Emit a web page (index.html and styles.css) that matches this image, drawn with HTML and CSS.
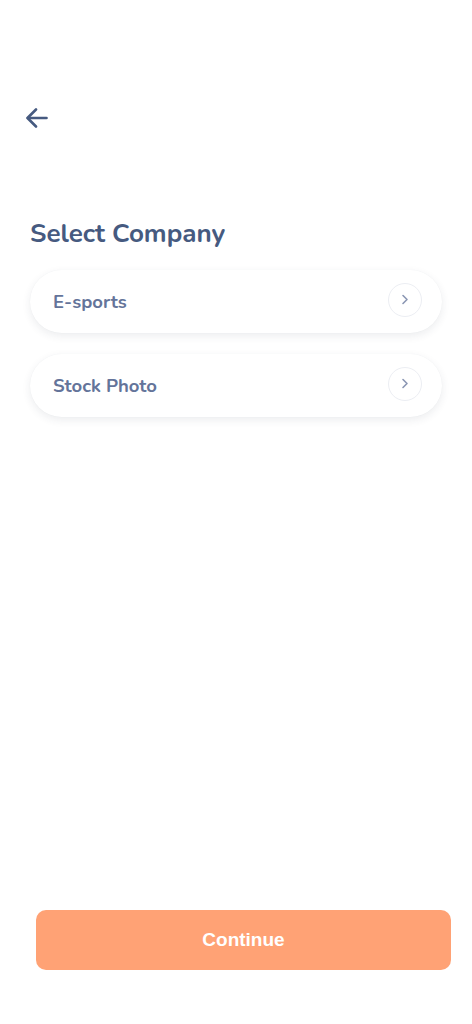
FILE: index.html
```html
<!DOCTYPE html>
<html>
<head>
<meta charset="utf-8">
<link rel="stylesheet" href="styles.css">
</head>
<body>
<div class="screen">
  <header class="topbar">
    <button class="back" aria-label="Back">
      <svg width="22" height="20" viewBox="0 0 22 20" fill="none" stroke="#465a80" stroke-width="2.6" stroke-linecap="round" stroke-linejoin="round">
        <path d="M20.5 10H2"/>
        <path d="M10 1.5L1.5 10L10 18.5"/>
      </svg>
    </button>
  </header>
  <h1 class="title">Select Company</h1>
  <ul class="list">
    <li class="item">
      <span class="label">E-sports</span>
      <span class="chev">
        <svg width="8" height="11" viewBox="0 0 8 11" fill="none" stroke="#8a96b3" stroke-width="1.6" stroke-linecap="round" stroke-linejoin="round"><path d="M2 1.5L6 5.5L2 9.5"/></svg>
      </span>
    </li>
    <li class="item">
      <span class="label">Stock Photo</span>
      <span class="chev">
        <svg width="8" height="11" viewBox="0 0 8 11" fill="none" stroke="#8a96b3" stroke-width="1.6" stroke-linecap="round" stroke-linejoin="round"><path d="M2 1.5L6 5.5L2 9.5"/></svg>
      </span>
    </li>
  </ul>
  <div class="spacer"></div>
  <div class="footer">
    <button class="continue">Continue</button>
  </div>
</div>
</body>
</html>
```
FILE: styles.css
```css
* { box-sizing: border-box; }
html, body { margin: 0; padding: 0; background: #ffffff; }
body { font-family: "Nunito", Lato, "Open Sans", sans-serif; }
.screen {
  width: 472px;
  height: 1024px;
  display: flex;
  flex-direction: column;
}
.topbar {
  padding: 108px 0 0 26px;
  height: 128px;
}
.back {
  border: 0;
  background: none;
  padding: 0;
  width: 22px;
  height: 20px;
  display: block;
}
.title {
  margin: 89px 0 0 30px;
  font-size: 26px;
  font-weight: 700;
  color: #465a80;
  line-height: 34px;
  letter-spacing: 0;
}
.list {
  list-style: none;
  margin: 19px 0 0 30px;
  padding: 0;
  width: 412px;
  display: flex;
  flex-direction: column;
  gap: 21px;
}
.item {
  height: 63px;
  border-radius: 32px;
  background: #fff;
  box-shadow: 0 3px 8px rgba(40, 50, 80, 0.09), 0 0 1px rgba(40, 50, 80, 0.06);
  display: flex;
  align-items: center;
  justify-content: space-between;
  padding: 0 20px 0 23px;
}
.label {
  font-size: 18.5px;
  font-weight: 700;
  color: #64749a;
}
.chev {
  width: 34px;
  height: 34px;
  border-radius: 50%;
  border: 1px solid #eceef3;
  display: flex;
  align-items: center;
  justify-content: center;
  margin-top: -4px;
}
.spacer { flex: 1; }
.footer {
  padding: 0 21px 54px 36px;
}
.continue {
  width: 415px;
  height: 60px;
  border: 0;
  border-radius: 10px;
  background: #ffa275;
  color: #fff;
  font-family: "Liberation Sans", Arial, sans-serif;
  font-size: 19px;
  font-weight: 700;
  display: block;
}
```
